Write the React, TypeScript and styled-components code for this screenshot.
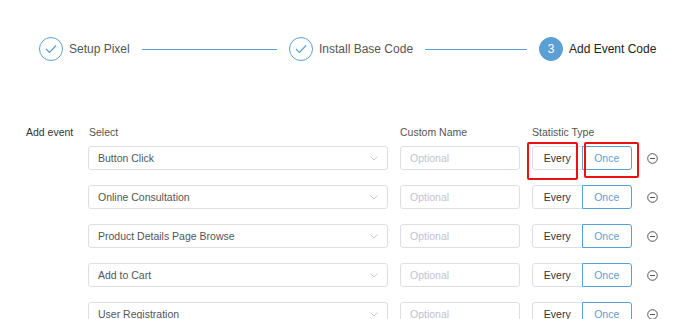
import * as React from 'react';
import styled, { createGlobalStyle } from 'styled-components';

const BLUE = '#5b9fd5';

const GlobalStyle = createGlobalStyle`
  html, body {
    margin: 0;
    padding: 0;
    background: #fff;
    font-family: "Liberation Sans", Arial, sans-serif;
  }
`;

const steps = ['Setup Pixel', 'Install Base Code', 'Add Event Code'];

const events = [
  'Button Click',
  'Online Consultation',
  'Product Details Page Browse',
  'Add to Cart',
  'User Registration',
];

const Page = styled.div`
  width: 697px;
  height: 319px;
  overflow: hidden;
`;

const Stepper = styled.div`
  display: flex;
  align-items: center;
  padding: 37px 0 0 39px;
  height: 24px;
`;

const Step = styled.div<{ $last?: boolean }>`
  display: flex;
  align-items: center;
  flex: ${p => (p.$last ? '0 0 auto' : '0 0 250px')};
`;

const StepCircle = styled.div<{ $active?: boolean }>`
  box-sizing: border-box;
  width: 24px;
  height: 24px;
  border-radius: 50%;
  border: 1px solid ${BLUE};
  background: ${p => (p.$active ? BLUE : '#fff')};
  color: #fff;
  font-size: 12px;
  display: flex;
  align-items: center;
  justify-content: center;
  flex-shrink: 0;
`;

const StepLabel = styled.span<{ $active?: boolean }>`
  margin-left: 6px;
  font-size: 12px;
  color: ${p => (p.$active ? '#222' : '#555')};
  white-space: nowrap;
`;

const StepLine = styled.div`
  flex: 1;
  height: 1px;
  background: ${BLUE};
  margin: 0 12px;
`;

const Form = styled.div`
  display: flex;
  flex-direction: column;
  gap: 15px;
  padding: 64px 0 0 26px;
  font-size: 10.5px;
`;

const Row = styled.div<{ $head?: boolean }>`
  display: grid;
  grid-template-columns: 50px 300px 120px 100px 14px;
  column-gap: 12px;
  align-items: center;
  margin-bottom: ${p => (p.$head ? '-8px' : '0')};
`;

const FieldLabel = styled.div`
  color: #333;
  line-height: 14px;
  white-space: nowrap;
`;

const Header = styled.div<{ $indent?: number }>`
  color: #555;
  line-height: 14px;
  padding-left: ${p => p.$indent ?? 0}px;
`;

const Box = styled.div`
  box-sizing: border-box;
  height: 24px;
  border: 1px solid #dcdfe6;
  border-radius: 3px;
  background: #fff;
  display: flex;
  align-items: center;
  padding: 0 9px;
`;

const SelectBox = styled(Box)`
  justify-content: space-between;
  color: #555;
`;

const Placeholder = styled(Box)`
  color: #c0c4cc;
`;

const ToggleGroup = styled.div`
  position: relative;
  display: flex;
  height: 24px;
`;

const ToggleButton = styled.div<{ $on?: boolean }>`
  box-sizing: border-box;
  flex: 1;
  display: flex;
  align-items: center;
  justify-content: center;
  border: 1px solid ${p => (p.$on ? BLUE : '#dcdfe6')};
  color: ${p => (p.$on ? BLUE : '#333')};
  background: #fff;
  border-radius: ${p => (p.$on ? '0 3px 3px 0' : '3px 0 0 3px')};
  margin-left: ${p => (p.$on ? '-1px' : '0')};
`;

const Highlight = styled.div<{ $l: number; $t: number; $w: number; $h: number }>`
  position: absolute;
  box-sizing: border-box;
  left: ${p => p.$l}px;
  top: ${p => p.$t}px;
  width: ${p => p.$w}px;
  height: ${p => p.$h}px;
  border: 2px solid #ee1111;
  border-radius: 2px;
  pointer-events: none;
`;

const Spacer = styled.div``;

const RemoveIcon = styled.div`
  display: flex;
  padding-left: 3px;
`;

const Chevron = () => (
  <svg width="8" height="5" viewBox="0 0 8 5" fill="none">
    <path d="M0.5 0.5 L4 4 L7.5 0.5" stroke="#c0c4cc" strokeWidth="0.9" />
  </svg>
);

const Check = () => (
  <svg width="12" height="10" viewBox="0 0 12 10" fill="none">
    <path d="M1 5 L4.5 8.5 L11 1.5" stroke={BLUE} strokeWidth="1.2" />
  </svg>
);

const MinusCircle = () => (
  <svg width="11" height="11" viewBox="0 0 11 11" fill="none">
    <circle cx="5.5" cy="5.5" r="4.8" stroke="#555" strokeWidth="1" />
    <path d="M3 5.5 H8" stroke="#555" strokeWidth="1" />
  </svg>
);

export default function App() {
  return (
    <Page>
      <GlobalStyle />
      <Stepper>
        {steps.map((s, i) => {
          const last = i === steps.length - 1;
          return (
            <Step key={s} $last={last}>
              <StepCircle $active={last}>{last ? '3' : <Check />}</StepCircle>
              <StepLabel $active={last}>{s}</StepLabel>
              {!last && <StepLine />}
            </Step>
          );
        })}
      </Stepper>

      <Form>
        <Row $head>
          <FieldLabel>Add event</FieldLabel>
          <Header $indent={1}>Select</Header>
          <Header>Custom Name</Header>
          <Header>Statistic Type</Header>
          <Spacer />
        </Row>
        {events.map((ev, i) => (
          <Row key={ev}>
            <Spacer />
            <SelectBox>
              <span>{ev}</span>
              <Chevron />
            </SelectBox>
            <Placeholder>Optional</Placeholder>
            <ToggleGroup>
              <ToggleButton>Every</ToggleButton>
              <ToggleButton $on>Once</ToggleButton>
              {i === 0 && (
                <>
                  <Highlight $l={-5} $t={-4} $w={51} $h={38} />
                  <Highlight $l={52} $t={-4} $w={55} $h={36} />
                </>
              )}
            </ToggleGroup>
            <RemoveIcon>
              <MinusCircle />
            </RemoveIcon>
          </Row>
        ))}
      </Form>
    </Page>
  );
}
